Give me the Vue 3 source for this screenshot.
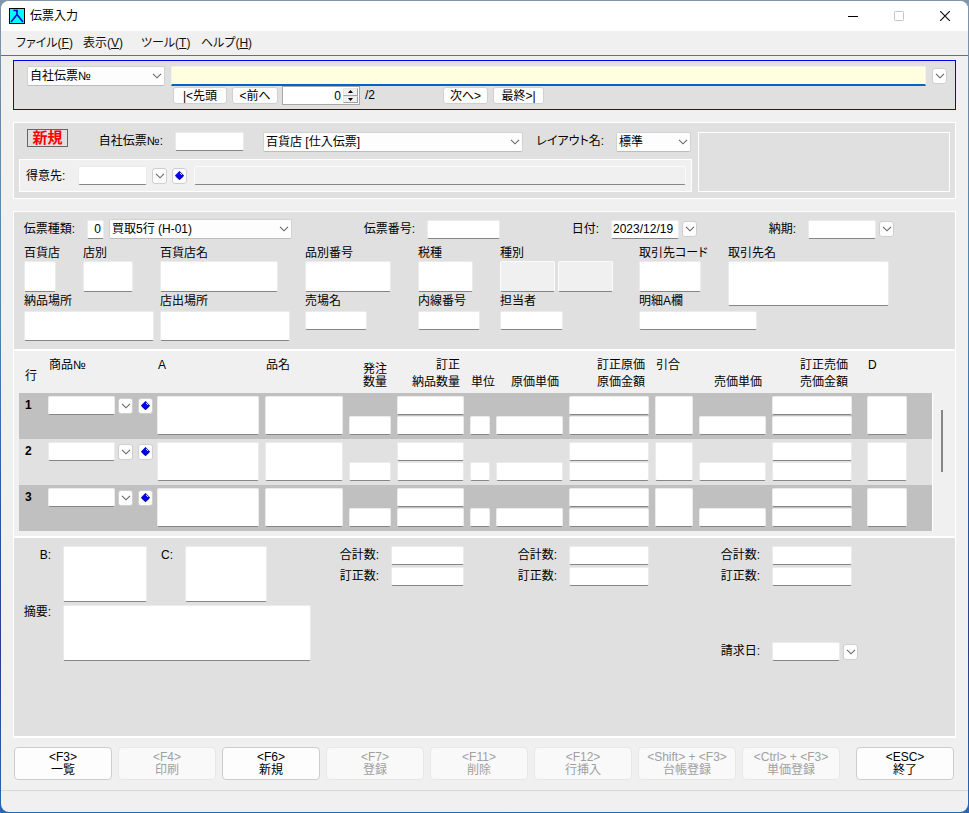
<script setup>
import { h, ref } from 'vue'

const Chevron = () =>
  h('svg', { class: 'chevron', viewBox: '0 0 10 6', width: 10, height: 6, 'aria-hidden': 'true' }, [
    h('path', { d: 'M1 .8 5 4.8 9 .8', fill: 'none', stroke: '#666', 'stroke-width': 1.1 })
  ])

const Diamond = () =>
  h('svg', { class: 'diamond', viewBox: '0 0 9 9', width: 9, height: 9, 'aria-hidden': 'true' }, [
    h('path', { d: 'M4.500 0 9 4.500 4.500 9 0 4.500Z', fill: '#0000f0' }),
    h('path', { d: 'M.5 5 4.500 8.600 8.500 5', fill: 'none', stroke: '#000080', 'stroke-width': 1 }),
    h('path', { d: 'M4.500 .5 8.500 4.500', fill: 'none', stroke: '#3a3a90', 'stroke-width': 1 }),
    h('path', { d: 'M5 2H6V3H7V4H6V3H5Z', fill: '#d8d8ff' })
  ])

const menus = [
  { text: 'ファイル', key: 'F' },
  { text: '表示', key: 'V' },
  { text: 'ツール', key: 'T' },
  { text: 'ヘルプ', key: 'H' }
]

const position = ref('0')
const slipType = ref('0')
const slipDate = ref('2023/12/19')

const details = [
  { id: 'store', label: '百貨店', area: 'store' },
  { id: 'branch', label: '店別', area: 'branch' },
  { id: 'storename', label: '百貨店名', area: 'storename' },
  { id: 'itemno', label: '品別番号', area: 'itemno' },
  { id: 'tax', label: '税種', area: 'tax' },
  { id: 'vendorcode', label: '取引先コード', area: 'vendorcode' },
  { id: 'vendor', label: '取引先名', area: 'vendor' },
  { id: 'place', label: '納品場所', area: 'place' },
  { id: 'outplace', label: '店出場所', area: 'outplace' },
  { id: 'floor', label: '売場名', area: 'floor' },
  { id: 'ext', label: '内線番号', area: 'ext' },
  { id: 'person', label: '担当者', area: 'person' },
  { id: 'acolumn', label: '明細A欄', area: 'acolumn' }
]

const columns = [
  { key: 'row', lines: ['行'], head: 'mid' },
  { key: 'item', lines: ['商品№'], head: 'top' },
  { key: 'a', lines: ['A'], head: 'top', kind: 'tall' },
  { key: 'name', lines: ['品名'], head: 'top', kind: 'tall' },
  { key: 'order', lines: ['発注', '数量'], head: 'low right', kind: 'single' },
  { key: 'deliver', lines: ['訂正', '納品数量'], head: 'split right', kind: 'double' },
  { key: 'unit', lines: ['単位'], head: 'low', kind: 'single' },
  { key: 'cost', lines: ['原価単価'], head: 'low right', kind: 'single' },
  { key: 'costsum', lines: ['訂正原価', '原価金額'], head: 'split right', kind: 'double' },
  { key: 'match', lines: ['引合'], head: 'top', kind: 'tall' },
  { key: 'price', lines: ['売価単価'], head: 'low right', kind: 'single' },
  { key: 'pricesum', lines: ['訂正売価', '売価金額'], head: 'split right', kind: 'double' },
  { key: 'd', lines: ['D'], head: 'top', kind: 'tall' }
]
const cells = columns.slice(2)

const actions = [
  { key: '<F3>', text: '一覧', on: true },
  { key: '<F4>', text: '印刷', on: false },
  { key: '<F6>', text: '新規', on: true },
  { key: '<F7>', text: '登録', on: false },
  { key: '<F11>', text: '削除', on: false },
  { key: '<F12>', text: '行挿入', on: false },
  { key: '<Shift> + <F3>', text: '台帳登録', on: false },
  { key: '<Ctrl> + <F3>', text: '単価登録', on: false },
  { key: '<ESC>', text: '終了', on: true }
]
</script>

<template>
  <div class="window">
    <header class="titlebar">
      <svg class="app-icon" viewBox="0 0 16 16" width="16" height="16" aria-hidden="true">
        <rect x=".5" y=".5" width="15" height="15" fill="#00ffff" stroke="#000" />
        <path d="M4.500 2.500H8V6.500L14 14M8 6.500 2 14" fill="none" stroke="#0000d8" stroke-width="1.600" />
      </svg>
      <h1>伝票入力</h1>
      <div class="caption-buttons">
        <button type="button" aria-label="最小化"><svg width="10" height="10" viewBox="0 0 10 10"><path d="M0 5.500H10" stroke="#000" /></svg></button>
        <button type="button" aria-label="最大化" disabled><svg width="10" height="10" viewBox="0 0 10 10"><rect x=".5" y=".5" width="9" height="9" rx="1" fill="none" stroke="#c4c4c4" /></svg></button>
        <button type="button" aria-label="閉じる"><svg width="10" height="10" viewBox="0 0 10 10"><path d="M0 0 10 10M10 0 0 10" stroke="#111" stroke-width="1.200" /></svg></button>
      </div>
    </header>

    <nav class="menubar">
      <a v-for="m in menus" :key="m.key" href="#">{{ m.text }}(<u>{{ m.key }}</u>)</a>
    </nav>

    <main>
      <section class="search">
        <div class="combo">
          <select aria-label="検索項目"><option>自社伝票№</option></select>
          <Chevron />
        </div>
        <input class="query" type="text" aria-label="検索値">
        <button type="button" class="mini" aria-label="検索候補"><Chevron /></button>
        <div class="pager">
          <button type="button" class="nav first">|&lt;先頭</button>
          <button type="button" class="nav prev">&lt;前へ</button>
          <div class="spinner">
            <input v-model="position" type="text" aria-label="表示位置">
            <div class="steps">
              <button type="button" aria-label="増やす"><svg width="5" height="3" viewBox="0 0 5 3"><path d="M0 3 2.500 0 5 3Z" /></svg></button>
              <button type="button" aria-label="減らす"><svg width="5" height="3" viewBox="0 0 5 3"><path d="M0 0 2.500 3 5 0Z" /></svg></button>
            </div>
          </div>
          <span class="count">/2</span>
          <button type="button" class="nav next">次へ&gt;</button>
          <button type="button" class="nav last">最終&gt;|</button>
        </div>
      </section>

      <section class="panel head">
        <div class="head-main">
          <div class="head-row">
            <strong class="badge">新規</strong>
            <label for="own-no">自社伝票№:</label>
            <input id="own-no" class="box" type="text">
            <div class="combo">
              <select aria-label="伝票区分"><option>百貨店 [仕入伝票]</option></select>
              <Chevron />
            </div>
            <label for="layout">レイアウト名:</label>
            <div class="combo">
              <select id="layout"><option>標準</option></select>
              <Chevron />
            </div>
          </div>
          <div class="customer">
            <label for="customer">得意先:</label>
            <input id="customer" class="box" type="text">
            <button type="button" class="mini" aria-label="得意先候補"><Chevron /></button>
            <button type="button" class="mini" aria-label="得意先検索"><Diamond /></button>
            <input class="box wide" type="text" disabled aria-label="得意先名">
          </div>
        </div>
        <div class="notice"></div>
      </section>

      <section class="panel slip">
        <div class="slip-row">
          <label for="slip-type">伝票種類:</label>
          <input id="slip-type" v-model="slipType" class="box num" type="text">
          <div class="combo">
            <select aria-label="伝票種類名"><option>買取5行 (H-01)</option></select>
            <Chevron />
          </div>
          <label for="slip-no">伝票番号:</label>
          <input id="slip-no" class="box" type="text">
          <label for="slip-date">日付:</label>
          <input id="slip-date" v-model="slipDate" class="box date" type="text">
          <button type="button" class="mini" aria-label="日付選択"><Chevron /></button>
          <label for="due">納期:</label>
          <input id="due" class="box" type="text">
          <button type="button" class="mini" aria-label="納期選択"><Chevron /></button>
        </div>
        <div class="slip-grid">
          <template v-for="d in details" :key="d.id">
            <label :for="d.id" :class="['l', 'l-' + d.area]">{{ d.label }}</label>
            <input :id="d.id" type="text" :class="['box', 'i-' + d.area]">
          </template>
          <label for="kind1" class="l l-kind">種別</label>
          <div class="i-kind">
            <input id="kind1" class="box" type="text" disabled>
            <input class="box" type="text" disabled aria-label="種別名">
          </div>
        </div>
      </section>

      <section class="panel lines">
        <div class="table-wrap">
          <table>
            <colgroup>
              <col v-for="c in columns" :key="c.key" :class="'c-' + c.key">
            </colgroup>
            <thead>
              <tr>
                <th v-for="c in columns" :key="c.key" scope="col" :class="'c-' + c.key">
                  <div :class="['th', c.head]"><span v-for="t in c.lines" :key="t">{{ t }}</span></div>
                </th>
              </tr>
            </thead>
            <tbody>
              <tr v-for="n in 3" :key="n">
                <th scope="row" class="rowno">{{ n }}</th>
                <td>
                  <div class="item-cell">
                    <input class="box" type="text" :aria-label="n + '行 商品№'">
                    <button type="button" class="mini" aria-label="商品候補"><Chevron /></button>
                    <button type="button" class="mini" aria-label="商品検索"><Diamond /></button>
                  </div>
                </td>
                <td v-for="c in cells" :key="c.key" :class="'c-' + c.key">
                  <div :class="['cell', c.kind]">
                    <input v-if="c.kind === 'double'" class="box" type="text" :aria-label="n + '行 ' + c.lines[0]">
                    <input class="box" type="text" :aria-label="n + '行 ' + c.lines[c.lines.length - 1]">
                  </div>
                </td>
              </tr>
            </tbody>
          </table>
        </div>
        <div class="scroll"><div class="thumb"></div></div>
      </section>

      <section class="panel totals">
        <label for="b" class="t-b">B:</label>
        <textarea id="b" class="box i-b"></textarea>
        <label for="c" class="t-c">C:</label>
        <textarea id="c" class="box i-c"></textarea>
        <template v-for="k in 3" :key="k">
          <label :for="'sum' + k" :class="['s' + k, 'r1']">合計数:</label>
          <input :id="'sum' + k" type="text" :class="['box', 'v' + k, 'r1']">
          <label :for="'fix' + k" :class="['s' + k, 'r2']">訂正数:</label>
          <input :id="'fix' + k" type="text" :class="['box', 'v' + k, 'r2']">
        </template>
        <label for="memo" class="t-memo">摘要:</label>
        <textarea id="memo" class="box i-memo"></textarea>
        <label for="bill" class="t-bill">請求日:</label>
        <div class="i-bill">
          <input id="bill" class="box" type="text">
          <button type="button" class="mini" aria-label="請求日選択"><Chevron /></button>
        </div>
      </section>

      <div class="actions">
        <button v-for="a in actions" :key="a.text" type="button" :disabled="!a.on">
          <span>{{ a.key }}</span><span>{{ a.text }}</span>
        </button>
      </div>
    </main>
    <footer class="status"></footer>
  </div>
</template>

<style>
html {
  background: linear-gradient(180deg, #8195ab 0%, #6f8ba5 12%, #4a86b0 40%, #2858a8 62%, #2b3f86 80%, #2767b5 100%);
}
body {
  margin: 0;
}
</style>

<style scoped>
.window {
  box-sizing: border-box;
  display: flex;
  flex-direction: column;
  min-height: calc(100vh - 2px);
  margin: 1px;
  border-radius: 8px;
  overflow: hidden;
  background: #f0f0f0;
  color: #000;
  font: 12px/14px "Liberation Sans", "Noto Sans CJK JP", sans-serif;
  font-feature-settings: "palt";
}
.window *,
.window *::before {
  box-sizing: border-box;
}
input,
select,
textarea,
button {
  margin: 0;
  padding: 0;
  min-width: 0;
  font: inherit;
  font-feature-settings: inherit;
  color: inherit;
  outline: none;
}
label,
button,
a {
  white-space: nowrap;
}

.titlebar {
  display: flex;
  align-items: center;
  height: 30px;
  padding: 0 0 0 8px;
  background: #fff;
}
h1 {
  margin: 0 auto 0 5px;
  font-size: 12px;
  font-weight: 400;
  line-height: 16px;
}
.caption-buttons {
  display: flex;
}
.caption-buttons button {
  display: grid;
  place-items: center;
  width: 46px;
  height: 28px;
  border: 0;
  background: none;
}
.menubar {
  display: grid;
  grid-template-columns: 67px 58px 60px 60px;
  align-items: center;
  height: 25px;
  padding-left: 15px;
  border-bottom: 1px solid #6e6e6e;
}
.menubar a {
  color: #111;
  text-decoration: none;
}
main {
  display: flex;
  flex-direction: column;
  flex: 1;
  padding: 4px 12px 0;
}

.box {
  height: 19px;
  padding: 0 2px;
  border: 1px solid #ebebeb;
  border-bottom-color: #868686;
  border-radius: 2px;
  background: #fff;
}
.box:disabled {
  border-color: #fbfbfb;
  border-bottom-color: #868686;
  background: #f0f0f0;
}
textarea.box {
  display: block;
  resize: none;
}
.combo {
  display: grid;
  grid-template-columns: 1fr;
  align-items: center;
}
.combo select,
.combo .chevron {
  grid-area: 1 / 1;
}
.combo select {
  appearance: none;
  width: 100%;
  height: 20px;
  padding: 0 20px 0 2px;
  border: 1px solid #d2d2d2;
  border-bottom-color: #bcbcbc;
  border-radius: 2px;
  background: #fdfdfd;
}
.combo .chevron {
  justify-self: end;
  margin-right: 3px;
  pointer-events: none;
}
.mini {
  display: grid;
  place-items: center;
  flex: none;
  width: 15px;
  height: 16px;
  border: 1px solid #cfcfcf;
  border-radius: 3px;
  background: #fdfdfd;
}

.search {
  display: grid;
  grid-template-columns: 138px 1fr 15px;
  grid-template-rows: 20px 20px;
  column-gap: 6px;
  height: 50px;
  padding: 5px 8px 0 13px;
  border: 1px solid #0000f0;
  background: #e0e0e0;
}
.search .mini {
  margin-top: 2px;
}
.query {
  height: 20px;
  border: 1px solid #f2f2f2;
  border-bottom: 2px solid #0067c0;
  background: #ffffe0;
}
.pager {
  grid-column: 2;
  display: flex;
  align-items: flex-start;
  padding-left: 2px;
}
.nav {
  height: 17px;
  margin-top: 1px;
  border: 1px solid #d0d0d0;
  border-radius: 3px;
  background: #fdfdfd;
}
.first {
  width: 54px;
}
.prev {
  width: 46px;
  margin: 1px 4px 0 5px;
}
.next {
  width: 45px;
}
.last {
  width: 51px;
  margin-left: 5px;
}
.spinner {
  display: flex;
  width: 78px;
  height: 19px;
  padding: 1px;
  border: 1px solid #a8a8a8;
  background: #fff;
}
.spinner input {
  flex: 1;
  padding-right: 2px;
  border: 0;
  text-align: right;
}
.steps {
  display: grid;
  grid-template-rows: 1fr 1fr;
  width: 15px;
}
.steps button {
  display: grid;
  place-items: center;
  border: 1px solid #a0a0a0;
  border-top-color: #e6e6e6;
  border-left-color: #e6e6e6;
  background: #f0f0f0;
}
.count {
  width: 78px;
  padding-left: 5px;
  margin-right: 5px;
  line-height: 19px;
}

.panel {
  border: 1px solid #fff;
  background: #e0e0e0;
}
.head {
  display: grid;
  grid-template-columns: 673px 1fr;
  gap: 6px;
  height: 77px;
  margin-top: 12px;
  padding: 6px 5px;
}
.head-main {
  display: grid;
  grid-template-rows: 30px 33px;
}
.head-row {
  display: grid;
  grid-template-columns: 41px 107px 88px 260px 93px 75px;
  align-items: start;
  padding: 3px 0 0 8px;
}
.head-row label {
  justify-self: end;
  margin-top: 2px;
  padding-right: 12px;
}
.head-row .box {
  width: 69px;
}
.badge {
  height: 18px;
  margin-top: -3px;
  border: 1px solid #666;
  color: #f00;
  font-size: 15px;
  line-height: 16px;
  text-align: center;
}
.customer {
  display: flex;
  align-items: center;
  padding: 0 5px 0 6px;
  border: 1px solid #fff;
  background: #f0f0f0;
}
.customer label {
  width: 52px;
}
.customer .box {
  width: 69px;
}
.customer .mini {
  margin-left: 5px;
}
.customer .wide {
  flex: 1;
  margin-left: 7px;
}
.notice {
  margin-top: 3px;
  border: 1px solid #fff;
}

.slip {
  height: 139px;
  margin-top: 12px;
  padding: 7px 10px 0;
}
.slip-row {
  display: grid;
  grid-template-columns: 63px 22px 183px 135px 73px 111px 71px 15px 111px 71px 15px;
  align-items: center;
  height: 20px;
}
.slip-row label {
  justify-self: end;
  padding-right: 12px;
}
.slip-row .num {
  width: 17px;
  padding: 0 2px;
  text-align: right;
}
.slip-row .date,
#due {
  width: 68px;
}
.slip-row .date {
  padding: 0 1px;
}
.slip-grid {
  display: grid;
  grid-template-columns: 59px 77px 145px 113px 82px 139px 89px 1fr;
  grid-template-rows: 16px 30px 20px 30px;
  margin-top: 6px;
}
.l {
  align-self: start;
  line-height: 16px;
}
.l-store { grid-area: 1 / 1; }
.l-branch { grid-area: 1 / 2; }
.l-storename { grid-area: 1 / 3; }
.l-itemno { grid-area: 1 / 4; }
.l-tax { grid-area: 1 / 5; }
.l-kind { grid-area: 1 / 6; }
.l-vendorcode { grid-area: 1 / 7; }
.l-vendor { grid-area: 1 / 8; }
.l-place,
.l-outplace,
.l-floor,
.l-ext,
.l-person,
.l-acolumn { padding-top: 2px; }
.l-place { grid-area: 3 / 1 / auto / span 2; }
.l-outplace { grid-area: 3 / 3; }
.l-floor { grid-area: 3 / 4; }
.l-ext { grid-area: 3 / 5; }
.l-person { grid-area: 3 / 6; }
.l-acolumn { grid-area: 3 / 7; }
.i-store { grid-area: 2 / 1; width: 32px; height: 31px; }
.i-branch { grid-area: 2 / 2; width: 50px; height: 31px; }
.i-storename { grid-area: 2 / 3; width: 118px; height: 31px; }
.i-itemno { grid-area: 2 / 4; width: 86px; height: 31px; }
.i-tax { grid-area: 2 / 5; width: 55px; height: 31px; }
.i-kind { grid-area: 2 / 6; display: flex; gap: 3px; }
.i-kind .box { width: 55px; height: 31px; }
.i-vendorcode { grid-area: 2 / 7; width: 62px; height: 31px; }
.i-vendor { grid-area: 2 / 8 / span 2; width: 161px; height: 45px; }
.i-place { grid-area: 4 / 1 / auto / span 2; width: 130px; height: 30px; }
.i-outplace { grid-area: 4 / 3; width: 130px; height: 30px; }
.i-floor { grid-area: 4 / 4; width: 62px; }
.i-ext { grid-area: 4 / 5; width: 62px; }
.i-person { grid-area: 4 / 6; width: 63px; }
.i-acolumn { grid-area: 4 / 7 / auto / span 2; width: 118px; }

.lines {
  display: flex;
  height: 187px;
  padding: 0 0 5px 5px;
  background: #f0f0f0;
}
.table-wrap {
  flex: 1;
}
table {
  width: 100%;
  border-collapse: collapse;
  table-layout: fixed;
}
th,
td {
  padding: 0;
  font-weight: 400;
  text-align: left;
  vertical-align: top;
}
.th {
  display: flex;
  flex-direction: column;
  height: 42px;
  padding: 7px 0 4px 1px;
  white-space: nowrap;
}
.mid {
  justify-content: center;
  padding: 7px 0 0 6px;
}
.low {
  justify-content: flex-end;
}
.split {
  justify-content: space-between;
}
.right {
  align-items: flex-end;
  padding-right: 10px;
}
.c-pricesum .right {
  padding-right: 19px;
}
.c-order .th {
  line-height: 13px;
}
col.c-row { width: 29px; }
col.c-item { width: 109px; }
col.c-a { width: 108px; }
col.c-name { width: 84px; }
col.c-order { width: 48px; }
col.c-deliver { width: 73px; }
col.c-unit { width: 26px; }
col.c-cost { width: 73px; }
col.c-costsum { width: 86px; }
col.c-match { width: 44px; }
col.c-price { width: 73px; }
col.c-pricesum { width: 95px; }
tbody tr {
  background: #c0c0c0;
}
tbody tr:nth-child(2) {
  background: #e1e1e1;
}
.rowno {
  padding: 5px 0 0 6px;
  font-weight: 700;
}
.item-cell {
  display: flex;
  align-items: center;
  padding-top: 3px;
}
.item-cell .box {
  width: 67px;
}
.item-cell .mini {
  margin-left: 3px;
}
.item-cell .mini + .mini {
  margin-left: 5px;
}
.cell {
  display: flex;
  flex-direction: column;
  justify-content: flex-end;
  gap: 1px;
  height: 46px;
  padding: 3px 6px 4px 0;
}
.cell .box {
  width: 100%;
  flex: none;
}
.tall .box {
  height: 39px;
}
.c-pricesum .cell {
  padding-right: 15px;
}
.c-d .cell {
  width: 46px;
}
.scroll {
  display: flex;
  justify-content: center;
  width: 23px;
  margin-top: 42px;
  padding: 17px 4px 0 0;
  border-left: 1px solid #fff;
}
.thumb {
  width: 2px;
  height: 62px;
  background: #868686;
}

.totals {
  display: grid;
  grid-template-columns: 39px 99px 23px 155px 51px 126px 52px 152px 51px 1fr;
  grid-template-rows: 21px 38px 56px;
  flex: 1;
  padding: 8px 10px;
  border-bottom-width: 2px;
}
.totals label {
  justify-self: end;
  margin-top: 2px;
  padding-right: 12px;
}
.t-b { grid-area: 1 / 1; }
.i-b { grid-area: 1 / 2 / span 2; width: 84px; height: 56px; }
.t-c { grid-area: 1 / 3; }
.i-c { grid-area: 1 / 4 / span 2; width: 82px; height: 56px; }
.r1 { grid-row: 1; }
.r2 { grid-row: 2; }
.s1 { grid-column: 5; }
.v1 { grid-column: 6; width: 73px; }
.s2 { grid-column: 7; }
.v2 { grid-column: 8; width: 80px; }
.s3 { grid-column: 9; }
.v3 { grid-column: 10; width: 80px; }
.totals .t-memo { grid-area: 3 / 1; margin-top: 0; }
.i-memo { grid-area: 3 / 2 / auto / span 4; width: 248px; height: 56px; }
.totals .t-bill { grid-area: 3 / 9; align-self: end; margin-bottom: 3px; }
.i-bill {
  grid-area: 3 / 10;
  display: flex;
  align-items: center;
  align-self: end;
  gap: 3px;
}
.i-bill .box { width: 68px; }

.actions {
  display: flex;
  gap: 6px;
  padding: 9px 2px 10px 1px;
}
.actions button {
  display: flex;
  flex-direction: column;
  align-items: center;
  justify-content: center;
  flex: 1;
  max-width: 98px;
  height: 33px;
  border: 1px solid #cdcdcd;
  border-radius: 4px;
  background: #fdfdfd;
  line-height: 13px;
}
.actions button:disabled {
  border-color: #e7e7e7;
  background: #f9f9f9;
  color: #a0a0a0;
}
.actions button:last-child {
  margin-left: auto;
}
.status {
  height: 22px;
  border-top: 1px solid #d7d7d7;
}
</style>
